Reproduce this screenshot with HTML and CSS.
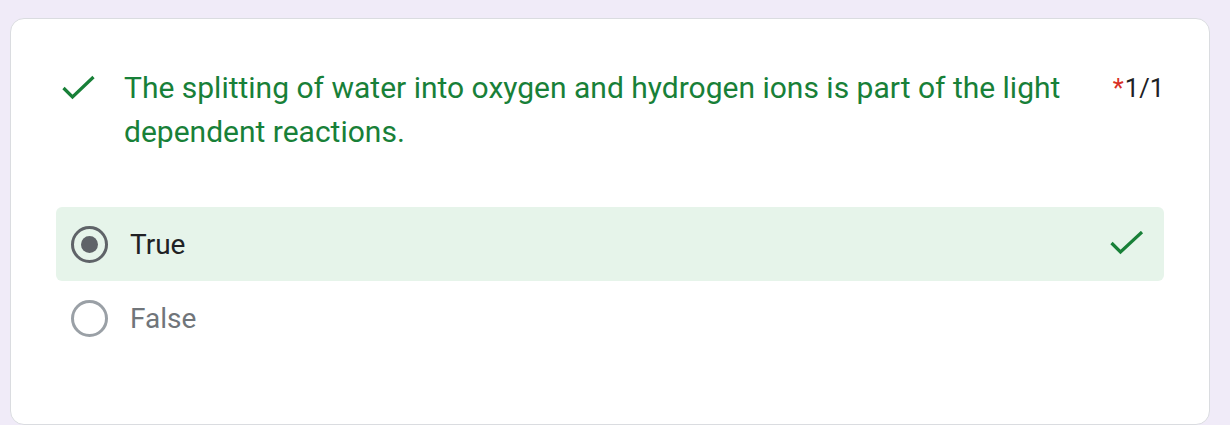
FILE: index.html
```html
<!DOCTYPE html>
<html lang="en">
<head>
<meta charset="utf-8">
<title>Quiz question</title>
<link rel="stylesheet" href="styles.css">
</head>
<body>
<div class="card">
  <div class="header">
    <svg class="head-check" width="34" height="26" viewBox="0 0 34 26" aria-hidden="true">
      <polyline points="1.5,13 10.5,22 31.5,2" fill="none" stroke="#188038" stroke-width="3.2"/>
    </svg>
    <div class="question">The splitting of water into oxygen and hydrogen ions is part of the light dependent reactions.</div>
    <div class="score"><span class="req">*</span>1/1</div>
  </div>
  <div class="options">
    <div class="option correct">
      <span class="radio checked"></span>
      <span class="label">True</span>
      <svg class="opt-check" width="34" height="26" viewBox="0 0 34 26" aria-hidden="true">
        <polyline points="1.5,12 10.5,21 32,1" fill="none" stroke="#188038" stroke-width="3.2"/>
      </svg>
    </div>
    <div class="option">
      <span class="radio"></span>
      <span class="label muted">False</span>
    </div>
  </div>
</div>
</body>
</html>
```

FILE: styles.css
```css
html, body {
  margin: 0;
  background: #f0ebf8;
}
body {
  padding: 18px 20px 0 10px;
  font-family: Roboto, "Liberation Sans", Arial, sans-serif;
}
.card {
  box-sizing: border-box;
  width: 1200px;
  height: 407px;
  background: #ffffff;
  border: 1px solid #dadce0;
  border-radius: 14px;
  padding: 47px 45px 0 45px;
}
.header {
  display: flex;
  align-items: flex-start;
}
.head-check {
  flex: none;
  margin: 9px 0 0 6px;
}
.question {
  flex: 1;
  margin-left: 28px;
  color: #188038;
  font-size: 30px;
  line-height: 44px;
  padding-right: 30px;
}
.score {
  flex: none;
  font-size: 25.5px;
  line-height: 44px;
  color: #202124;
}
.req {
  color: #d93025;
  margin-right: 1px;
}
.options {
  margin-top: 53px;
  display: flex;
  flex-direction: column;
}
.option {
  height: 74px;
  display: flex;
  align-items: center;
  padding: 0 20px 0 15px;
  border-radius: 6px;
}
.option.correct {
  background: #e6f4ea;
}
.radio {
  flex: none;
  box-sizing: border-box;
  width: 37px;
  height: 37px;
  border-radius: 50%;
  border: 3px solid #9aa0a6;
  display: flex;
  align-items: center;
  justify-content: center;
}
.radio.checked {
  border-color: #5f6368;
}
.radio.checked::after {
  content: "";
  width: 17px;
  height: 17px;
  border-radius: 50%;
  background: #5f6368;
}
.label {
  flex: 1;
  margin-left: 22px;
  font-size: 28px;
  color: #202124;
}
.label.muted {
  color: #70757a;
}
.opt-check {
  flex: none;
}
```
